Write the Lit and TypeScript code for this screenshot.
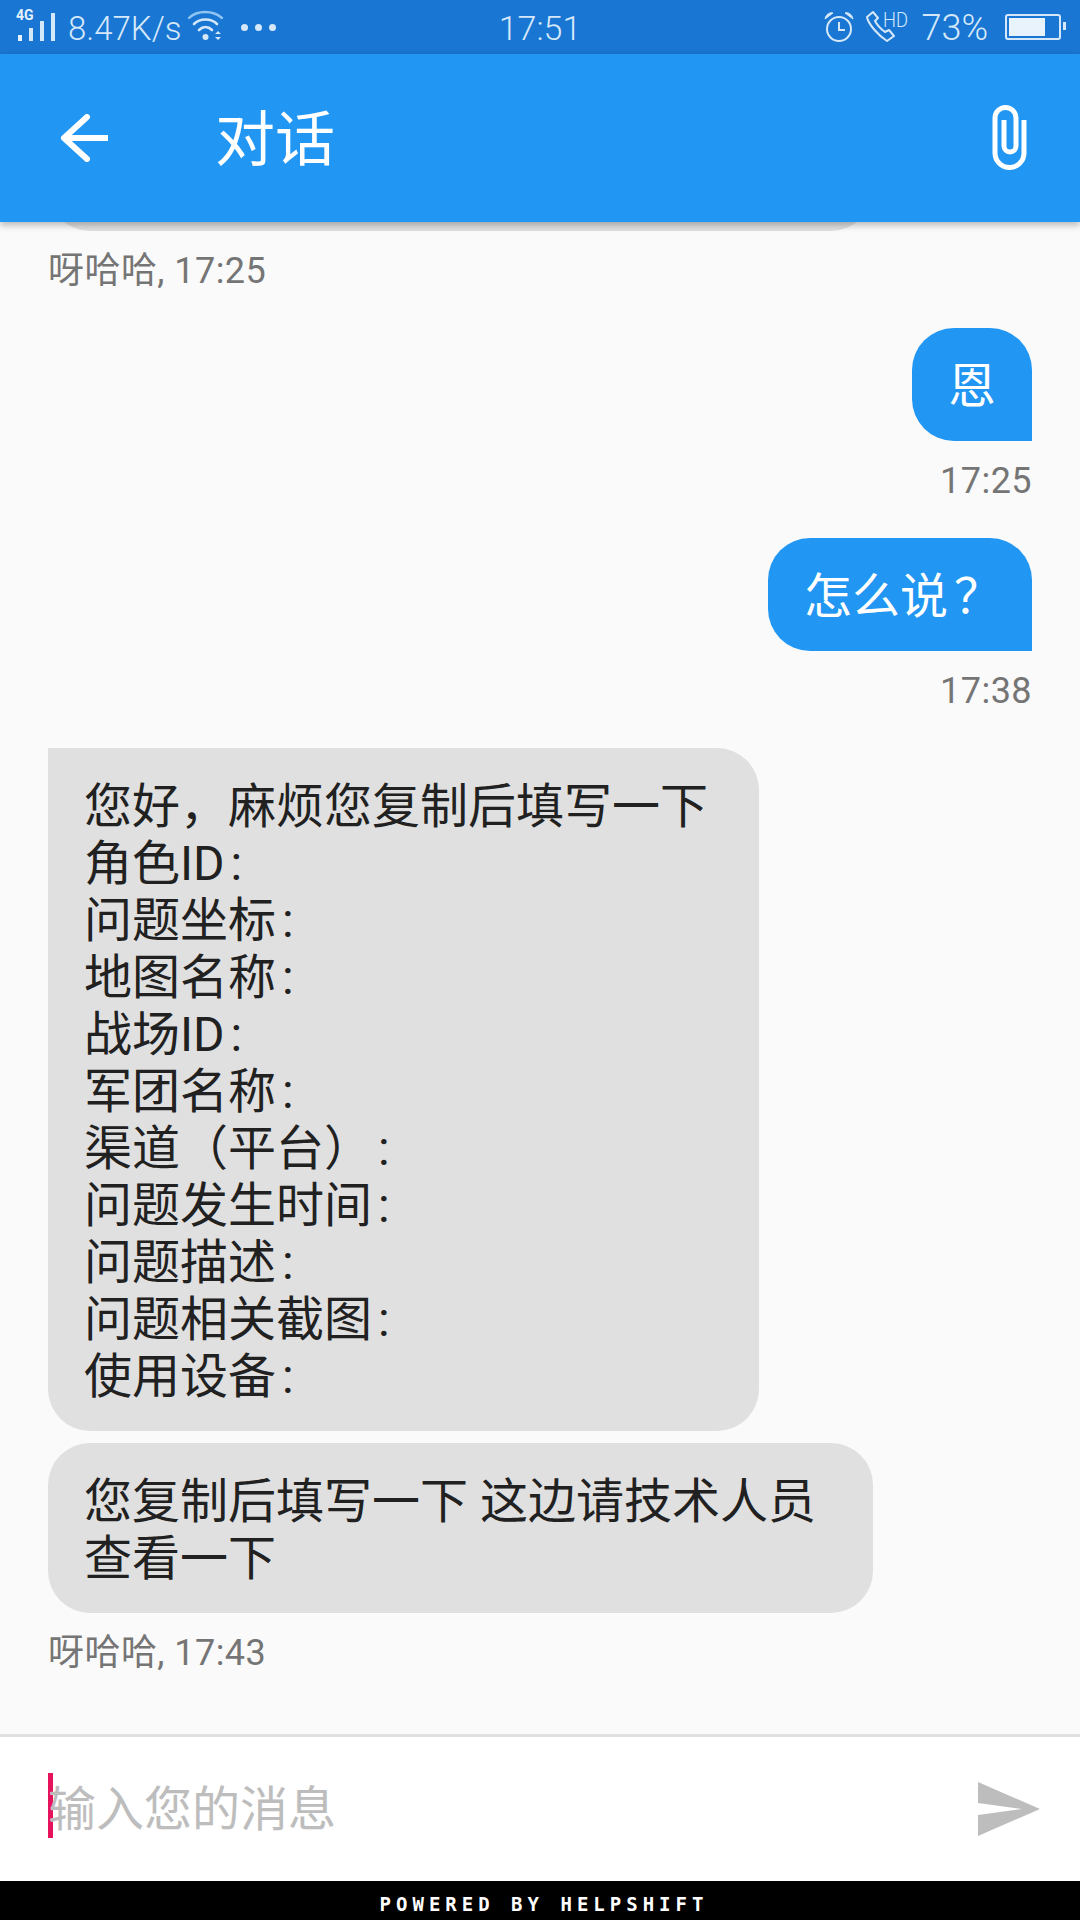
import { LitElement, html, css, svg } from 'lit';
import { customElement } from 'lit/decorators.js';

const FORM_LINES = [
  '您好，麻烦您复制后填写一下',
  '角色ID:',
  '问题坐标:',
  '地图名称:',
  '战场ID:',
  '军团名称:',
  '渠道（平台）:',
  '问题发生时间:',
  '问题描述:',
  '问题相关截图:',
  '使用设备:',
];

const signalIcon = svg`<svg class="signal" width="42" height="34" viewBox="0 0 42 34">
  <text x="1" y="13" font-family="Roboto" font-weight="700" font-size="14" fill="#e3f2fd">4G</text>
  <rect x="3" y="28" width="4" height="6" fill="#e3f2fd"/>
  <rect x="14" y="21" width="4" height="13" fill="#d5e8fa"/>
  <rect x="25" y="14" width="4" height="20" fill="#d5e8fa"/>
  <rect x="36" y="6" width="4" height="28" fill="#d5e8fa"/>
</svg>`;

const wifiIcon = svg`<svg class="wifi" width="40" height="34" viewBox="0 0 40 34" fill="none" stroke-linecap="round">
  <path d="M3 9 C11 1 27 1 36 9" stroke="#90c4f2" stroke-width="2.4"/>
  <path d="M8 15 C14 9 25 9 31 15" stroke="#d5e8fa" stroke-width="2.6"/>
  <path d="M13 21 C17 17 22 17 26 21" stroke="#d5e8fa" stroke-width="2.6"/>
  <circle cx="19.5" cy="28" r="3" fill="#d5e8fa"/>
  <path d="M29 25 L32 22 L35 25 Z M29 28 L35 28 L32 31 Z" fill="#d5e8fa"/>
</svg>`;

const alarmIcon = svg`<svg class="lift" width="30" height="32" viewBox="0 0 30 32" fill="none" stroke="#d5e8fa">
  <circle cx="15" cy="18" r="12" stroke-width="2"/>
  <path d="M15 11 V19 H21" stroke-width="2"/>
  <path d="M1 8 C2 3 6 1 9 2 Z M29 8 C28 3 24 1 21 2 Z" fill="#d5e8fa" stroke-width="1"/>
</svg>`;

const phoneIcon = svg`<svg class="lift phone" width="48" height="32" viewBox="0 0 48 32" fill="none" stroke="#d5e8fa">
  <path d="M8 1 L2 6 C3 13 14 25 22 30 L29 25 L24 19 L20 21 C16 18 12 14 10 10 L13 7 Z" stroke-width="2" stroke-linejoin="round"/>
  <text x="18" y="16" textLength="25" lengthAdjust="spacingAndGlyphs" font-family="Roboto" font-weight="300" font-size="21" fill="#d5e8fa" stroke="none">HD</text>
</svg>`;

const backIcon = svg`<svg width="48" height="48" viewBox="0 0 48 48" fill="none" stroke="#fff" stroke-width="6" stroke-linejoin="round">
  <path d="M27 3 L4 24 L27 45 M4 24 H48" stroke-linecap="round"/>
</svg>`;

const clipIcon = svg`<svg width="40" height="72" viewBox="0 0 40 72" fill="none" stroke="#fff" stroke-width="5">
  <path d="M34 18 V51 A14.5 14.5 0 0 1 5 51 V16 A10.5 10.5 0 0 1 26 16 V44 A6 6 0 0 1 14 44 V18"/>
</svg>`;

const sendIcon = svg`<svg width="62" height="54" viewBox="0 0 62 54">
  <path d="M0 0 L62 27 L0 54 V33 L44 27 L0 21 Z" fill="#bdbdbd"/>
</svg>`;

@customElement('app-root')
export class AppRoot extends LitElement {
  static styles = css`
    :host {
      display: flex;
      flex-direction: column;
      width: 1080px;
      height: 1920px;
      overflow: hidden;
      background: #fafafa;
      font-family: Roboto, 'Noto Sans CJK SC', sans-serif;
    }

    .status {
      flex: none;
      box-sizing: border-box;
      display: grid;
      grid-template-columns: 1fr auto 1fr;
      align-items: center;
      height: 54px;
      padding: 3px 15px 0;
      background: #1976d2;
      color: #d5e8fa;
      font-size: 34px;
      font-weight: 300;
      line-height: 51px;
    }
    .status-left,
    .status-right {
      display: flex;
      align-items: center;
    }
    .status-right {
      justify-content: flex-end;
    }
    .speed {
      font-size: 33px;
    }
    .signal {
      margin-right: 11px;
      margin-bottom: 9px;
    }
    .wifi {
      margin-left: 4px;
      margin-bottom: 5px;
    }
    .dots {
      display: flex;
      gap: 7px;
      margin: 0 0 3px 15px;
    }
    .dots i {
      width: 7px;
      height: 7px;
      border-radius: 50%;
      background: #d5e8fa;
    }
    .lift {
      margin-bottom: 3px;
    }
    .phone {
      margin-left: 11px;
      overflow: visible;
    }
    .percent {
      margin-left: 8px;
      font-size: 36px;
    }
    .battery {
      position: relative;
      box-sizing: border-box;
      width: 56px;
      height: 26px;
      margin: 0 4px 3px 17px;
      padding: 2px;
      border: 2px solid #d5e8fa;
      border-radius: 3px;
    }
    .battery span {
      display: block;
      width: 36px;
      height: 100%;
      background: #e9f3fc;
    }
    .battery::after {
      content: '';
      position: absolute;
      top: 6px;
      right: -7px;
      width: 3px;
      height: 8px;
      background: #d5e8fa;
    }

    .toolbar {
      flex: none;
      position: relative;
      z-index: 1;
      display: flex;
      align-items: center;
      height: 168px;
      padding: 0 50px 0 60px;
      background: #2196f3;
      color: #fff;
      box-shadow: 0 3px 7px rgba(0, 0, 0, 0.28);
    }
    .title {
      flex: 1;
      margin: 6px 0 0 107px;
      font-size: 60px;
      line-height: 70px;
    }

    .list {
      flex: 1;
      min-height: 0;
      display: flex;
      flex-direction: column;
      justify-content: flex-end;
      overflow: hidden;
      padding: 0 48px 60px;
    }
    .bubble {
      flex: none;
      box-sizing: border-box;
      max-width: 825px;
      padding: 30px 36px 26px;
      border-radius: 42px;
      font-size: 48px;
      line-height: 57px;
    }
    .in {
      align-self: flex-start;
      background: #e0e0e0;
      color: #212121;
    }
    .out {
      align-self: flex-end;
      background: #2196f3;
      color: #fff;
      border-bottom-right-radius: 0;
    }
    .first {
      border-top-left-radius: 0;
      padding-right: 51px;
    }
    .next {
      margin-top: 12px;
    }
    .offscreen {
      width: 825px;
      height: 170px;
    }
    .punct {
      position: relative;
      left: 6px;
    }
    .meta {
      flex: none;
      margin: 19px 0 36px;
      color: #757575;
      font-size: 36px;
      letter-spacing: 0.45px;
      line-height: 42px;
    }
    .meta.right {
      align-self: flex-end;
    }
    .meta:last-child {
      margin-bottom: 0;
    }

    .composer {
      flex: none;
      display: flex;
      align-items: center;
      height: 144px;
      padding: 0 40px 0 48px;
      border-top: 3px solid #e0e0e0;
      background: #fff;
    }
    .field {
      flex: 1;
      display: flex;
      align-items: center;
    }
    .caret {
      width: 5px;
      height: 65px;
      margin: 0 -5px 7px 0;
      background: #e6125c;
    }
    .placeholder {
      color: #bdbdbd;
      font-size: 48px;
      line-height: 57px;
    }

    .powered {
      flex: none;
      height: 35px;
      padding: 4px 0 0 8px;
      background: #000;
      color: #fff;
      font-family: 'DejaVu Sans Mono', monospace;
      font-size: 19px;
      font-weight: 700;
      letter-spacing: 5px;
      line-height: 39px;
      text-align: center;
    }
  `;

  private formLine(line: string) {
    if (!line.endsWith(':')) return html`<div>${line}</div>`;
    return html`<div>${line.slice(0, -1)}<span class="punct">:</span></div>`;
  }

  render() {
    return html`
      <div class="status">
        <div class="status-left">
          ${signalIcon}<span class="speed">8.47K/s</span>${wifiIcon}
          <div class="dots"><i></i><i></i><i></i></div>
        </div>
        <div>17:51</div>
        <div class="status-right">
          ${alarmIcon}${phoneIcon}<span class="percent">73%</span>
          <div class="battery"><span></span></div>
        </div>
      </div>
      <div class="toolbar">${backIcon}<div class="title">对话</div>${clipIcon}</div>
      <div class="list">
        <div class="bubble in offscreen"></div>
        <div class="meta">呀哈哈, 17:25</div>
        <div class="bubble out">恩</div>
        <div class="meta right">17:25</div>
        <div class="bubble out">怎么说<span class="punct">？</span></div>
        <div class="meta right">17:38</div>
        <div class="bubble in first">${FORM_LINES.map((line) => this.formLine(line))}</div>
        <div class="bubble in next">您复制后填写一下 这边请技术人员查看一下</div>
        <div class="meta">呀哈哈, 17:43</div>
      </div>
      <div class="composer">
        <div class="field">
          <div class="caret"></div>
          <div class="placeholder">输入您的消息</div>
        </div>
        ${sendIcon}
      </div>
      <div class="powered">POWERED BY HELPSHIFT</div>
    `;
  }
}
